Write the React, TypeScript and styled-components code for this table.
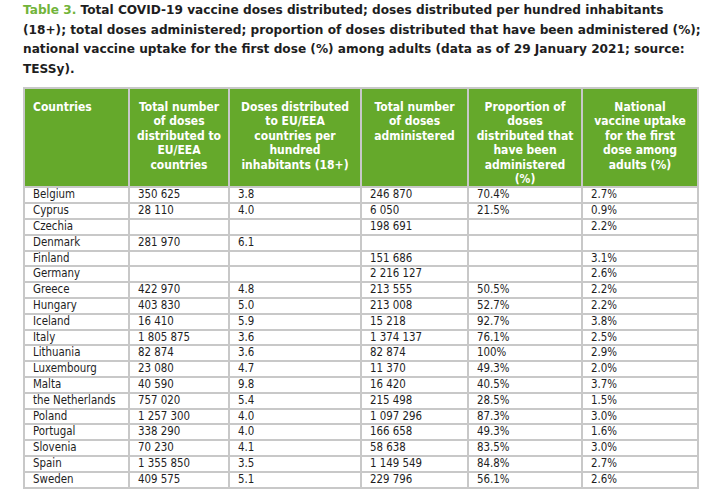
import React from "react";
import styled, { createGlobalStyle } from "styled-components";

const Global = createGlobalStyle`
  html, body { margin: 0; padding: 0; background: #ffffff; }
  body { font-family: "DejaVu Sans", Verdana, sans-serif; }
`;

const Page = styled.div`
  width: 717px;
  height: 499px;
  padding: 0 10px 0 23px;
  box-sizing: border-box;
  background: #fff;
`;

const Title = styled.p`
  margin: 0;
  padding-top: 1px;
  font-family: "DejaVu Sans", Verdana, sans-serif;
  font-weight: bold;
  font-size: 12.15px;
  line-height: 19.5px;
  color: #1e1e1e;
  height: 87px;
  box-sizing: border-box;
  white-space: nowrap;
`;

const Label = styled.span`
  color: #72b43a;
`;

const Table = styled.table`
  border-collapse: collapse;
  table-layout: fixed;
  width: 674px;
  font-family: "DejaVu Sans Condensed", "DejaVu Sans", Tahoma, sans-serif;
  font-size: 11.4px;
  color: #1e1e1e;
  border: 2px solid #bdbdbd;
`;

const Th = styled.th<{ $left?: boolean }>`
  background: #65a92b;
  color: #ffffff;
  font-weight: bold;
  font-size: 12px;
  vertical-align: top;
  text-align: ${(p) => (p.$left ? "left" : "center")};
  padding: 11px 4px 0 ${(p) => (p.$left ? "8px" : "4px")};
  line-height: 14.4px;
  height: 96px;
  border: 2px solid #c8c8c8;
  box-sizing: border-box;
  white-space: nowrap;
`;

const HeadLine = styled.span`
  display: block;
`;

const Td = styled.td`
  height: 13.8px;
  line-height: 13.8px;
  padding: 0 6px 0 8px;
  border: 2px solid #c8c8c8;
  white-space: nowrap;
  vertical-align: middle;
`;

const widths = [105, 100, 132, 107, 114, 116];

const headers: string[][] = [
  ["Countries"],
  ["Total number", "of doses", "distributed to", "EU/EEA", "countries"],
  ["Doses distributed", "to EU/EEA", "countries per", "hundred", "inhabitants (18+)"],
  ["Total number", "of doses", "administered"],
  ["Proportion of", "doses", "distributed that", "have been", "administered", "(%)"],
  ["National", "vaccine uptake", "for the first", "dose among", "adults (%)"],
];

const rows: string[][] = [
  ["Belgium", "350 625", "3.8", "246 870", "70.4%", "2.7%"],
  ["Cyprus", "28 110", "4.0", "6 050", "21.5%", "0.9%"],
  ["Czechia", "", "", "198 691", "", "2.2%"],
  ["Denmark", "281 970", "6.1", "", "", ""],
  ["Finland", "", "", "151 686", "", "3.1%"],
  ["Germany", "", "", "2 216 127", "", "2.6%"],
  ["Greece", "422 970", "4.8", "213 555", "50.5%", "2.2%"],
  ["Hungary", "403 830", "5.0", "213 008", "52.7%", "2.2%"],
  ["Iceland", "16 410", "5.9", "15 218", "92.7%", "3.8%"],
  ["Italy", "1 805 875", "3.6", "1 374 137", "76.1%", "2.5%"],
  ["Lithuania", "82 874", "3.6", "82 874", "100%", "2.9%"],
  ["Luxembourg", "23 080", "4.7", "11 370", "49.3%", "2.0%"],
  ["Malta", "40 590", "9.8", "16 420", "40.5%", "3.7%"],
  ["the Netherlands", "757 020", "5.4", "215 498", "28.5%", "1.5%"],
  ["Poland", "1 257 300", "4.0", "1 097 296", "87.3%", "3.0%"],
  ["Portugal", "338 290", "4.0", "166 658", "49.3%", "1.6%"],
  ["Slovenia", "70 230", "4.1", "58 638", "83.5%", "3.0%"],
  ["Spain", "1 355 850", "3.5", "1 149 549", "84.8%", "2.7%"],
  ["Sweden", "409 575", "5.1", "229 796", "56.1%", "2.6%"],
];

export default function App() {
  return (
    <Page>
      <Global />
      <Title>
        <Label>Table 3.</Label> Total COVID-19 vaccine doses distributed; doses distributed per hundred inhabitants
        <br />
        (18+); total doses administered; proportion of doses distributed that have been administered (%);
        <br />
        national vaccine uptake for the first dose (%) among adults (data as of 29 January 2021; source:
        <br />
        TESSy).
      </Title>
      <Table>
        <colgroup>
          {widths.map((w, i) => (
            <col key={i} style={{ width: w }} />
          ))}
        </colgroup>
        <thead>
          <tr>
            {headers.map((lines, i) => (
              <Th key={i} $left={i === 0}>
                {lines.map((l, k) => (
                  <HeadLine key={k}>{l}</HeadLine>
                ))}
              </Th>
            ))}
          </tr>
        </thead>
        <tbody>
          {rows.map((r, i) => (
            <tr key={i}>
              {r.map((c, j) => (
                <Td key={j}>{c}</Td>
              ))}
            </tr>
          ))}
        </tbody>
      </Table>
    </Page>
  );
}
